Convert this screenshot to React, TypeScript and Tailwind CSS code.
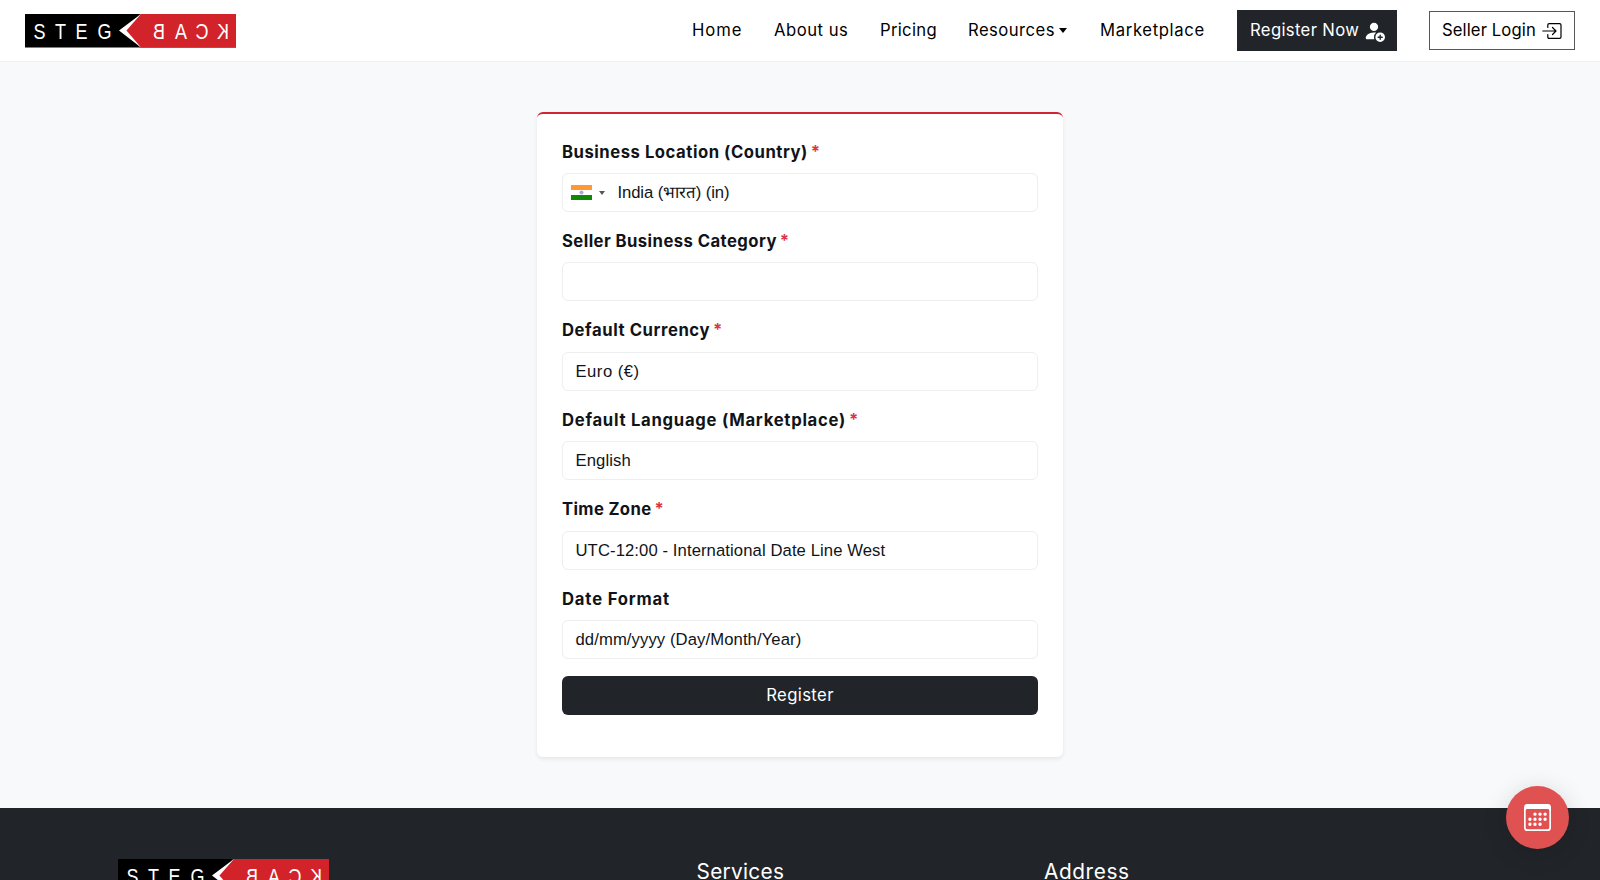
import { BsCalendar3, BsPersonFillAdd } from 'react-icons/bs'

const navLinks = [
  { label: 'Home', style: 'w-[82px] tracking-[0.9px]' },
  { label: 'About us', style: 'w-[106px] tracking-[0.5px]' },
  { label: 'Pricing', style: 'w-[88px] tracking-[0.3px]' },
  { label: 'Resources', style: 'w-[132px] tracking-[0.45px]', caret: true },
  { label: 'Marketplace', style: 'w-[137px] tracking-[0.65px]' },
]

const fields = [
  {
    label: 'Business Location (Country)',
    value: 'India (भारत) (in)',
    required: true,
    flag: true,
    style: 'tracking-[0.53px]',
    valueStyle: 'tracking-[-0.1px]',
  },
  {
    label: 'Seller Business Category',
    value: '',
    required: true,
    style: 'tracking-[0.44px]',
    valueStyle: '',
  },
  {
    label: 'Default Currency',
    value: 'Euro (€)',
    required: true,
    style: 'tracking-[0.57px]',
    valueStyle: 'tracking-[0.5px]',
  },
  {
    label: 'Default Language (Marketplace)',
    value: 'English',
    required: true,
    style: 'tracking-[0.73px]',
    valueStyle: 'tracking-[0.1px]',
  },
  {
    label: 'Time Zone',
    value: 'UTC-12:00 - International Date Line West',
    required: true,
    style: 'tracking-[0.35px]',
    valueStyle: 'tracking-[0.09px]',
  },
  {
    label: 'Date Format',
    value: 'dd/mm/yyyy (Day/Month/Year)',
    required: false,
    style: 'tracking-[0.83px]',
    valueStyle: 'tracking-[0.09px]',
  },
]

const logoLetters = [
  { char: 'S', x: 14.5, flip: false },
  { char: 'T', x: 35.5, flip: false },
  { char: 'E', x: 56.5, flip: false },
  { char: 'G', x: 79.5, flip: false },
  { char: 'B', x: 134, flip: true },
  { char: 'A', x: 156, flip: true },
  { char: 'C', x: 177, flip: true },
  { char: 'K', x: 198, flip: true },
]

const Logo = () => (
  <svg width="211" height="34" viewBox="0 0 211 34" className="shrink-0">
    <rect width="211" height="33.5" fill="#000" />
    <path d="M115 0H211V33.5H115L101 16.5Z" fill="#d2232a" />
    <path d="M116 0L94 16.5L116 33.5L101.5 16.5Z" fill="#fff" />
    {logoLetters.map(({ char, x, flip }) => (
      <text
        key={char}
        transform={`translate(${x} 24.7) scale(${flip ? -0.8 : 0.8} 1)`}
        textAnchor="middle"
        fontFamily="Liberation Sans, sans-serif"
        fontSize="22.5"
        fill="#fff"
      >
        {char}
      </text>
    ))}
  </svg>
)

const Flag = () => (
  <svg width="21" height="15" viewBox="0 0 21 15">
    <rect width="21" height="15" fill="#fff" />
    <rect width="21" height="5" fill="#ff9933" />
    <rect y="10" width="21" height="5" fill="#128807" />
    <circle cx="10.5" cy="7.5" r="2" fill="#a9a9dc" />
  </svg>
)

const LoginIcon = () => (
  <svg
    width="20"
    height="18"
    viewBox="0 0 20 18"
    fill="none"
    stroke="currentColor"
    strokeWidth="1.2"
    strokeLinecap="round"
    strokeLinejoin="round"
    className="ml-auto"
  >
    <path d="M5.8 5.5V3Q5.8 1.6 7.2 1.6H17.6Q19 1.6 19 3V15Q19 16.4 17.6 16.4H7.2Q5.8 16.4 5.8 15V12.5" />
    <path d="M0.8 9H14M10.5 5.5L14 9L10.5 12.5" />
  </svg>
)

const Header = () => (
  <header className="h-[62px] bg-white border-b border-[#f0f1f3] flex items-start justify-between pl-[25px] pr-[25px]">
    <div className="pt-[14px]">
      <Logo />
    </div>
    <nav className="flex items-start text-[16.67px] leading-[25px] text-black">
      {navLinks.map(({ label, style, caret }) => (
        <a key={label} className={`flex items-center pt-[17.5px] whitespace-nowrap ${style}`}>
          {label}
          {caret ? (
            <span className="ml-1 border-x-[4.5px] border-x-transparent border-t-[5px] border-t-black" />
          ) : null}
        </a>
      ))}
      <a className="mt-[10px] w-[160px] h-[41px] bg-[#212529] text-white flex items-center pl-[13px] pr-3 whitespace-nowrap">
        <span className="tracking-[0.35px]">Register Now</span>
        <BsPersonFillAdd className="ml-auto size-[22px]" />
      </a>
      <a className="mt-[11px] ml-8 w-[146px] h-[39px] border border-[#55585b] flex items-center px-3 whitespace-nowrap">
        <span className="tracking-[0.1px]">Seller Login</span>
        <LoginIcon />
      </a>
    </nav>
  </header>
)

const RegisterForm = () => (
  <form className="w-[526px] h-[645px] bg-white rounded-md border-t-2 border-[#cf2431] shadow-[0_2px_4px_rgba(0,0,0,0.08)] px-[25px] pt-[25.5px]">
    {fields.map(({ label, value, required, flag, style, valueStyle }) => (
      <div key={label} className="h-[89.45px]">
        <label className="flex h-[25px] mb-[8.5px] items-center gap-[3px] text-[16.67px] font-bold text-[#101418] whitespace-nowrap">
          <span className={style}>{label}</span>
          {required ? <span className="text-[#dc3545]">*</span> : null}
        </label>
        <div className="h-[39px] rounded-md border border-[#eceef0] flex items-center px-[12.5px] font-['Liberation_Sans',sans-serif] text-[16.67px] text-[#101418] whitespace-nowrap">
          {flag ? (
            <span className="flex items-center -ml-[5px] mr-[13px]">
              <Flag />
              <span className="ml-[7px] border-x-[3px] border-x-transparent border-t-4 border-t-[#555]" />
            </span>
          ) : null}
          <span className={valueStyle}>{value}</span>
        </div>
      </div>
    ))}
    <button
      type="button"
      className="block w-full h-[39px] rounded-md bg-[#212529] text-[16.67px] text-white"
    >
      <span className="tracking-[0.4px]">Register</span>
    </button>
  </form>
)

const Footer = () => (
  <footer className="h-[72px] bg-[#212529] flex items-start overflow-hidden text-white text-[20.8px] leading-[25px]">
    <div className="pl-[118px] pt-[51px] w-[696.5px]">
      <Logo />
    </div>
    <h5 className="w-[347.5px] pt-[51px]">
      <span className="tracking-[0.3px]">Services</span>
    </h5>
    <h5 className="pt-[51px]">
      <span className="tracking-[0.6px]">Address</span>
    </h5>
  </footer>
)

const App = () => (
  <div className="relative h-[880px] w-full overflow-hidden bg-[#f8f9fb] font-[Inter,sans-serif]">
    <Header />
    <main className="h-[746px] pt-[50px] flex justify-center items-start">
      <RegisterForm />
    </main>
    <Footer />
    <button
      type="button"
      className="absolute right-[31.5px] bottom-[31.5px] size-[63px] rounded-full bg-[#e05252] text-white flex items-center justify-center shadow-[0_4px_24px_rgba(0,0,0,0.15)]"
    >
      <BsCalendar3 className="size-[27px]" />
    </button>
  </div>
)

export default App
